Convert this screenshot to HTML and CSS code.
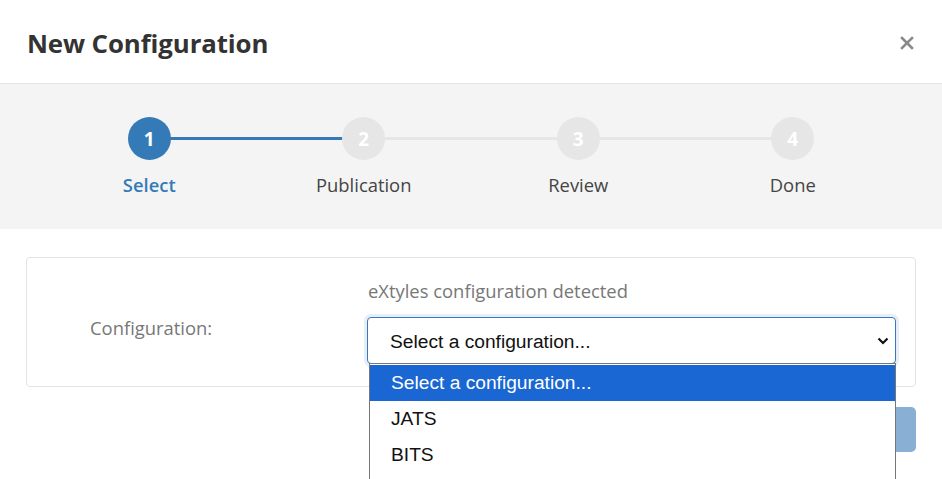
FILE: index.html
```html
<!DOCTYPE html>
<html>
<head>
<meta charset="utf-8">
<link rel="stylesheet" href="styles.css">
</head>
<body>
<div class="modal">
  <header class="modal-header">
    <h1 class="title">New Configuration</h1>
    <button class="close" aria-label="Close">
      <svg width="14" height="14" viewBox="0 0 14 14"><path d="M2 2 L12 12 M12 2 L2 12" stroke="#8a8a8a" stroke-width="2.6" stroke-linecap="square"/></svg>
    </button>
  </header>
  <section class="steps">
    <div class="step done active">
      <div class="track"><span class="circle">1</span></div>
      <div class="label">Select</div>
    </div>
    <div class="step">
      <div class="track"><span class="circle">2</span></div>
      <div class="label">Publication</div>
    </div>
    <div class="step">
      <div class="track"><span class="circle">3</span></div>
      <div class="label">Review</div>
    </div>
    <div class="step last">
      <div class="track"><span class="circle">4</span></div>
      <div class="label">Done</div>
    </div>
  </section>
  <section class="body">
    <div class="card">
      <div class="field-label">Configuration:</div>
      <div class="control">
        <div class="help">eXtyles configuration detected</div>
        <div class="select-wrap">
          <div class="select">
            <span>Select a configuration...</span>
            <svg class="chev" width="12" height="8" viewBox="0 0 12 8"><path d="M1.5 1.5 L6 6 L10.5 1.5" fill="none" stroke="#111" stroke-width="2.2"/></svg>
          </div>
          <ul class="dropdown">
            <li class="selected">Select a configuration...</li>
            <li>JATS</li>
            <li>BITS</li>
          </ul>
        </div>
      </div>
    </div>
    <div class="footer">
      <button class="btn">Next</button>
    </div>
  </section>
</div>
</body>
</html>
```
FILE: styles.css
```css
* { box-sizing: border-box; }
html, body { margin: 0; padding: 0; }
body {
  font-family: "Open Sans", "Noto Sans", sans-serif;
  background: #fff;
  width: 942px;
  height: 479px;
  overflow: hidden;
}
.modal { width: 942px; height: 479px; overflow: hidden; }
.modal-header {
  height: 84px;
  border-bottom: 1px solid #e5e5e5;
  display: flex;
  align-items: center;
  justify-content: space-between;
  padding: 0 29px 0 27px;
}
.title {
  margin: 0;
  font-size: 25.8px;
  font-weight: 700;
  color: #333;
  letter-spacing: -0.1px;
  position: relative;
  top: 1px;
}
.close {
  border: 0;
  background: none;
  padding: 0;
  width: 14px;
  height: 14px;
  display: flex;
  position: relative;
  top: 1px;
  left: 1px;
}
.steps {
  background: #f4f4f4;
  height: 145px;
  display: grid;
  grid-template-columns: repeat(4, 1fr);
  padding: 33px 42px 0;
}
.step { display: flex; flex-direction: column; align-items: center; }
.track {
  position: relative;
  width: 100%;
  display: flex;
  justify-content: center;
  height: 43px;
}
.step:not(.last) .track::after {
  content: "";
  position: absolute;
  left: calc(50% + 21px);
  width: calc(100% - 42px);
  top: 20px;
  height: 3px;
  background: #e6e6e6;
}
.step.done .track::after { background: #337ab7; }
.circle {
  width: 43px;
  height: 43px;
  border-radius: 50%;
  background: #e6e6e6;
  color: #fff;
  font-weight: 700;
  font-size: 19px;
  display: flex;
  align-items: center;
  justify-content: center;
  position: relative;
  z-index: 1;
}
.step.active .circle { background: #337ab7; }
.label {
  margin-top: 12px;
  font-size: 18.4px;
  color: #444;
}
.step.active .label { color: #337ab7; font-weight: 600; }
.body { padding: 28px 26px 0; }
.card {
  border: 1px solid #e3e3e3;
  border-radius: 4px;
  height: 130px;
  display: grid;
  grid-template-columns: 340px 1fr;
  padding: 22px 19px 0 0;
}
.field-label {
  padding: 35px 0 0 63px;
  font-size: 18.4px;
  color: #777;
}
.help {
  font-size: 18.4px;
  color: #777;
  padding-left: 1px;
  line-height: 26px;
  height: 39px;
  margin-top: -2px;
}
.select-wrap { position: relative; }
.select {
  height: 47px;
  border: 1px solid #3a78bd;
  border-radius: 4px;
  box-shadow: 0 0 0 3px #e6eef8;
  display: flex;
  align-items: center;
  justify-content: space-between;
  padding: 2px 6px 0 22px;
  font-family: "Liberation Sans", Arial, sans-serif;
  font-size: 19.2px;
  color: #111;
  background: #fff;
}
.chev { margin-top: -1px; }
.dropdown {
  position: absolute;
  left: 2px;
  right: 0;
  top: 46px;
  height: 200px;
  margin: 0;
  padding: 1px 0 0;
  list-style: none;
  background: #fff;
  border-left: 1px solid #767676;
  border-right: 1px solid #767676;
  border-top: 1px solid #767676;
  z-index: 5;
  font-family: "Liberation Sans", Arial, sans-serif;
  font-size: 19.2px;
  color: #111;
}
.dropdown li {
  height: 36px;
  line-height: 36px;
  padding-left: 21px;
}
.dropdown li.selected { background: #1a66d2; color: #fff; }
.footer {
  display: flex;
  justify-content: flex-end;
  padding-top: 20px;
}
.btn {
  width: 90px;
  height: 45px;
  border: 0;
  border-radius: 5px;
  background: #89afd5;
  color: #fff;
  font-family: inherit;
  font-size: 16px;
}
```
